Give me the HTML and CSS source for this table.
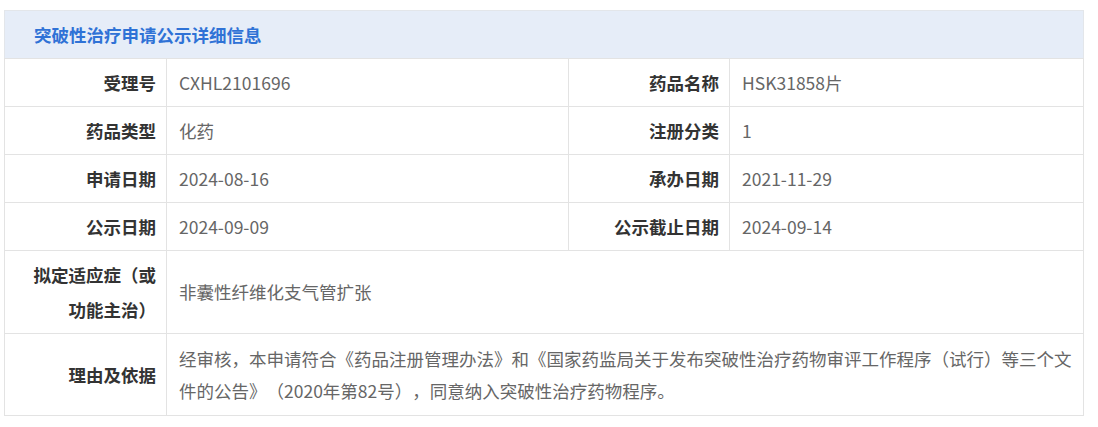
FILE: index.html
```html
<!DOCTYPE html>
<html lang="zh-CN">
<head>
<meta charset="utf-8">
<title>突破性治疗申请公示详细信息</title>
<link rel="stylesheet" href="styles.css">
</head>
<body>
<div class="panel">
  <div class="panel-head">突破性治疗申请公示详细信息</div>
  <table class="info">
    <colgroup>
      <col class="c-label"><col class="c-value"><col class="c-label2"><col>
    </colgroup>
    <tr>
      <th>受理号</th><td>CXHL2101696</td>
      <th>药品名称</th><td>HSK31858片</td>
    </tr>
    <tr>
      <th>药品类型</th><td>化药</td>
      <th>注册分类</th><td>1</td>
    </tr>
    <tr>
      <th>申请日期</th><td>2024-08-16</td>
      <th>承办日期</th><td>2021-11-29</td>
    </tr>
    <tr>
      <th>公示日期</th><td>2024-09-09</td>
      <th>公示截止日期</th><td>2024-09-14</td>
    </tr>
    <tr class="tall">
      <th class="wide-lh">拟定适应症（或功能主治）</th><td colspan="3">非囊性纤维化支气管扩张</td>
    </tr>
    <tr class="tall">
      <th>理由及依据</th><td colspan="3">经审核，本申请符合《药品注册管理办法》和《国家药监局关于发布突破性治疗药物审评工作程序（试行）等三个文件的公告》（2020年第82号），同意纳入突破性治疗药物程序。</td>
    </tr>
  </table>
</div>
</body>
</html>
```

FILE: styles.css
```css
html, body {
  margin: 0;
  padding: 0;
  background: #ffffff;
}
body {
  padding: 10px 14px 0 4px;
  font-family: "Noto Sans CJK SC", "Noto Sans", sans-serif;
  text-spacing-trim: space-all;
}
.panel {
  width: 1080px;
}
.panel-head {
  height: 47px;
  line-height: 47px;
  background: #e6edf8;
  border: 1px solid #e3e6ea;
  border-bottom: none;
  padding-left: 29px;
  color: #2f72d6;
  font-size: 17.5px;
  font-weight: 700;
}
.info {
  width: 1080px;
  border-collapse: collapse;
  table-layout: fixed;
  font-size: 17.5px;
}
.c-label { width: 162px; }
.c-value { width: 402px; }
.c-label2 { width: 161px; }
.info th, .info td {
  border: 1px solid #e3e3e3;
  height: 47px;
  padding: 0 4px 0 12px;
  line-height: 32px;
}
.info th {
  text-align: right;
  font-weight: 700;
  color: #333333;
  padding-right: 10px;
  padding-left: 18px;
}
.info td {
  text-align: left;
  color: #666666;
  font-weight: 400;
}
.info tr.tall th, .info tr.tall td {
  height: 69px;
  padding-top: 6px;
  padding-bottom: 6px;
}
.info tr.tall th.wide-lh {
  line-height: 35px;
}
```
